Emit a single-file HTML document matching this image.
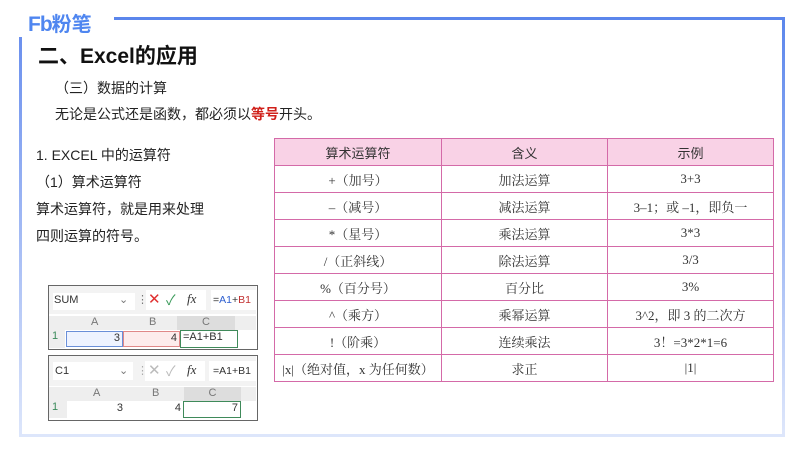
<!DOCTYPE html>
<html><head><meta charset="utf-8"><style>
*{margin:0;padding:0;box-sizing:border-box}
body{width:800px;height:450px;background:#fff;position:relative;overflow:hidden;font-family:"Liberation Sans","Noto Sans CJK SC",sans-serif;color:#222}
.a{position:absolute;white-space:nowrap}
table{border-collapse:collapse;position:absolute;left:274px;top:138px;width:500px;font-family:"Liberation Serif","Noto Serif CJK SC",serif;font-size:13px;color:#333}
td{border:1.3px solid #d46aa8;height:27px;text-align:center;padding:0}
tr:first-child td{background:#f9d2e6;font-family:"Liberation Sans","Noto Sans CJK SC",sans-serif;color:#333}
.xl{position:absolute;border:1.5px solid #666;background:#fff;font-size:11px;color:#333}
</style></head><body>
<div class="a" style="left:114px;top:17px;width:671px;height:3px;background:#5b86ec"></div>
<div class="a" style="left:782px;top:17px;width:3px;height:420px;background:linear-gradient(#5b86ec,#dfe7fb)"></div>
<div class="a" style="left:19px;top:434px;width:766px;height:3px;background:#dde6fb"></div>
<div class="a" style="left:19px;top:37px;width:3px;height:400px;background:linear-gradient(#6b90ee,#dde6fb)"></div>
<div class="a" style="left:28px;top:8px;font-size:21px;font-weight:bold;color:#4f86f0;letter-spacing:-1px">Fb<span style="letter-spacing:0;font-size:20px">粉笔</span></div>
<div class="a" style="left:38px;top:40px;font-size:21px;font-weight:bold;color:#111">二、Excel的应用</div>
<div class="a" style="left:55px;top:78px;font-size:14px">（三）数据的计算</div>
<div class="a" style="left:55px;top:104px;font-size:14px">无论是公式还是函数，都必须以<b style="color:#d0201a">等号</b>开头。</div>
<div class="a" style="left:36px;top:142px;font-size:14px;line-height:27px">1. EXCEL 中的运算符<br>（1）算术运算符<br>算术运算符，就是用来处理<br>四则运算的符号。</div>
<table>
<tr><td style="width:167px">算术运算符</td><td style="width:166px">含义</td><td>示例</td></tr>
<tr><td>+（加号）</td><td>加法运算</td><td>3+3</td></tr>
<tr><td>–（减号）</td><td>减法运算</td><td>3–1；或 –1，即负一</td></tr>
<tr><td>*（星号）</td><td>乘法运算</td><td>3*3</td></tr>
<tr><td>/（正斜线）</td><td>除法运算</td><td>3/3</td></tr>
<tr><td>%（百分号）</td><td>百分比</td><td>3%</td></tr>
<tr><td>^（乘方）</td><td>乘幂运算</td><td>3^2，即 3 的二次方</td></tr>
<tr><td>!（阶乘）</td><td>连续乘法</td><td>3！=3*2*1=6</td></tr>
<tr><td>|x|（绝对值，x 为任何数）</td><td>求正</td><td>|1|</td></tr>
</table>
<div class="xl" style="left:48px;top:285px;width:210px;height:65px">
 <div class="a" style="left:0;top:0;width:207px;height:28px;background:#f3f3f3"></div>
 <div class="a" style="left:4px;top:7px;width:82px;height:17px;background:#fff"></div>
 <div class="a" style="left:5px;top:8px">SUM</div>
 <div class="a" style="left:70px;top:7px;color:#777">⌄</div>
 <div class="a" style="left:88px;top:7px;color:#777">⋮</div>
 <div class="a" style="left:97px;top:4px;width:60px;height:20px;background:#fff"></div>
 <div class="a" style="left:99px;top:4px;font-size:15px;color:#e03030">✕</div>
 <div class="a" style="left:117px;top:4px;font-size:14px;color:#3a9a5a">✓</div>
 <div class="a" style="left:138px;top:5px;font-size:13px;font-style:italic;font-family:'Liberation Serif',serif">fx</div>
 <div class="a" style="left:162px;top:4px;width:45px;height:20px;background:#fff"></div>
 <div class="a" style="left:164px;top:8px;font-size:10.5px">=<span style="color:#2e5fd0">A1</span>+<span style="color:#c23030">B1</span></div>
 <div class="a" style="left:0;top:30px;width:207px;height:14px;background:#eee;color:#777;font-size:11px">
  <span class="a" style="left:42px;top:0">A</span><span class="a" style="left:100px;top:0">B</span><span class="a" style="left:128px;top:0;width:58px;height:14px;background:#ddd;text-align:center">C</span></div>
 <div class="a" style="left:0;top:44px;width:16px;height:18px;background:#eee;color:#3a8a5a;padding-left:3px">1</div>
 <div class="a" style="left:17px;top:45px;width:57px;height:16px;background:#eef3ff;border:1px solid #6a8fd8;text-align:right;padding-right:2px">3</div>
 <div class="a" style="left:74px;top:45px;width:57px;height:16px;background:#fdecec;border:1px solid #e08888;text-align:right;padding-right:2px">4</div>
 <div class="a" style="left:131px;top:44px;width:58px;height:18px;border:1.5px solid #3f8a5a;padding-left:2px">=A1+B1</div>
</div>
<div class="xl" style="left:48px;top:355px;width:210px;height:66px">
 <div class="a" style="left:0;top:0;width:207px;height:30px;background:#f3f3f3"></div>
 <div class="a" style="left:4px;top:6px;width:80px;height:18px;background:#fff"></div>
 <div class="a" style="left:6px;top:9px">C1</div>
 <div class="a" style="left:70px;top:8px;color:#777">⌄</div>
 <div class="a" style="left:88px;top:8px;color:#aaa">⋮</div>
 <div class="a" style="left:96px;top:5px;width:60px;height:20px;background:#fff"></div>
 <div class="a" style="left:99px;top:5px;font-size:15px;color:#bbb">✕</div>
 <div class="a" style="left:117px;top:5px;font-size:14px;color:#bbb">✓</div>
 <div class="a" style="left:138px;top:6px;font-size:13px;font-style:italic;font-family:'Liberation Serif',serif">fx</div>
 <div class="a" style="left:160px;top:5px;width:47px;height:20px;background:#fff"></div>
 <div class="a" style="left:164px;top:9px;font-size:10.5px">=A1+B1</div>
 <div class="a" style="left:0;top:31px;width:207px;height:14px;background:#eee;color:#777">
  <span class="a" style="left:44px;top:0">A</span><span class="a" style="left:103px;top:0">B</span><span class="a" style="left:135px;top:0;width:57px;height:14px;background:#ddd;text-align:center">C</span></div>
 <div class="a" style="left:0;top:45px;width:18px;height:17px;background:#eee;color:#3a8a5a;padding-left:3px">1</div>
 <div class="a" style="left:19px;top:46px;width:57px;height:16px;text-align:right;padding-right:2px">3</div>
 <div class="a" style="left:76px;top:46px;width:58px;height:16px;text-align:right;padding-right:2px">4</div>
 <div class="a" style="left:134px;top:45px;width:58px;height:17px;border:1.5px solid #3f8a5a;text-align:right;padding-right:2px">7</div>
</div>
</body></html>
